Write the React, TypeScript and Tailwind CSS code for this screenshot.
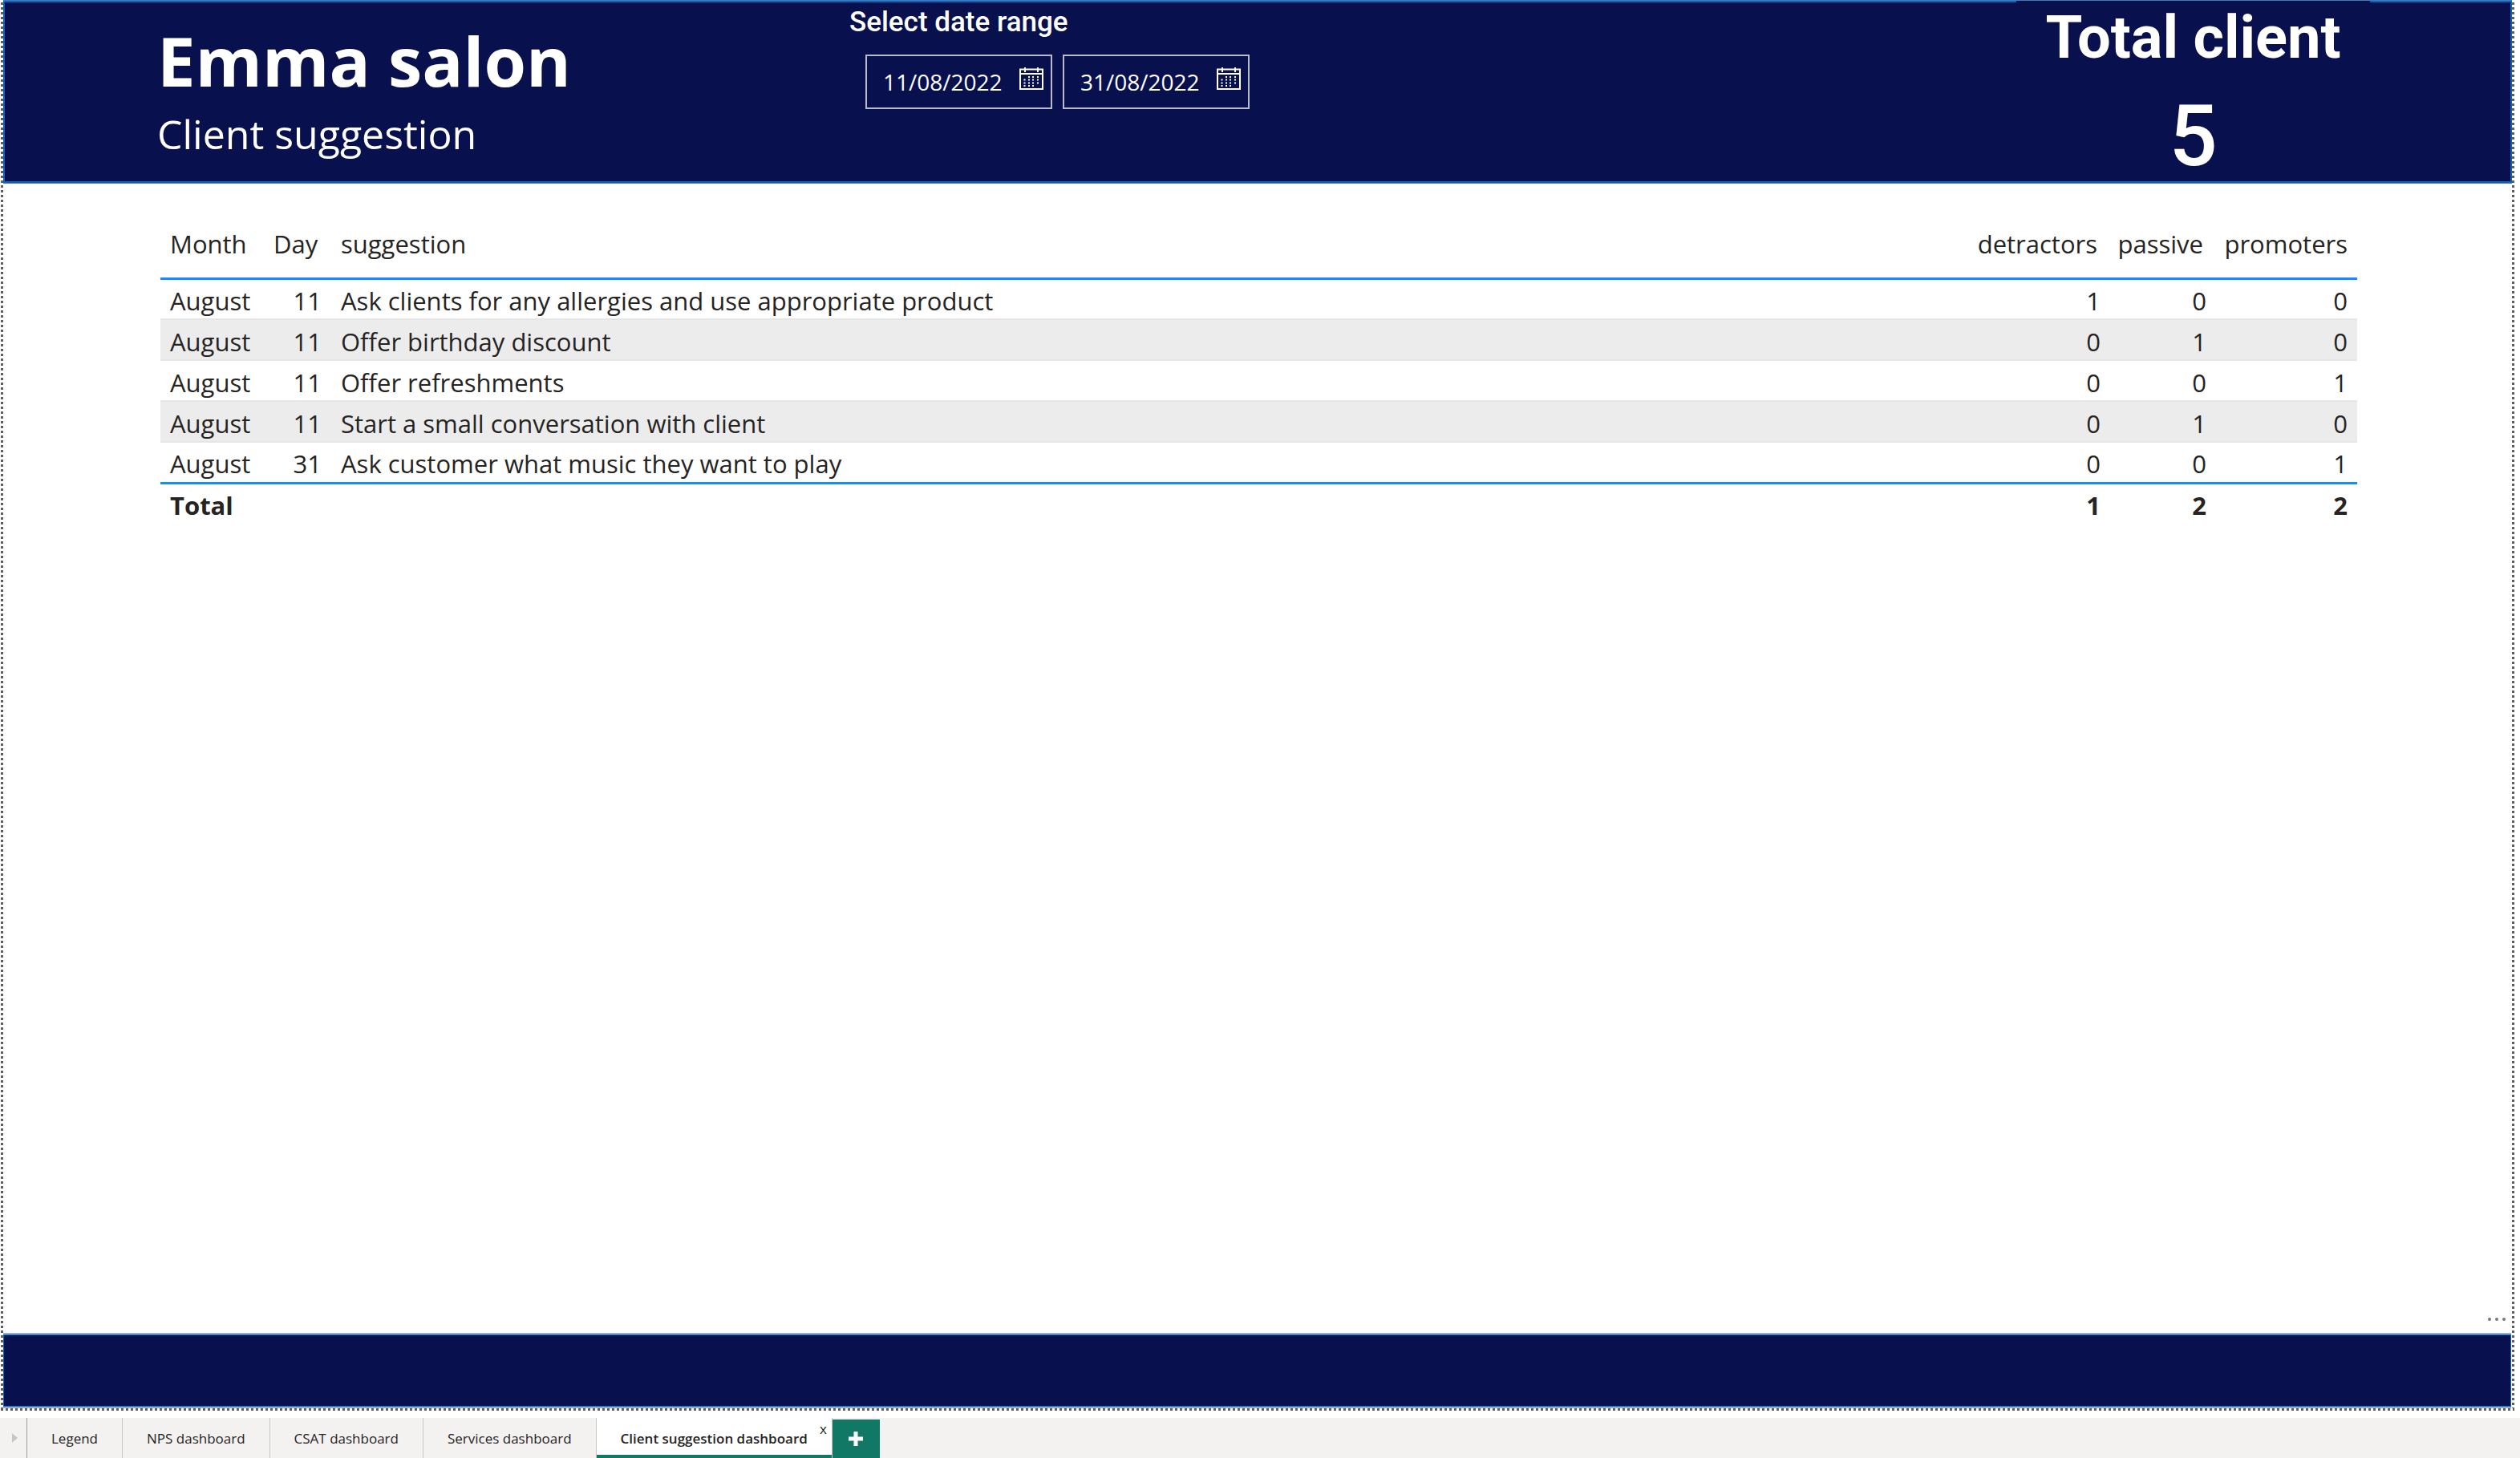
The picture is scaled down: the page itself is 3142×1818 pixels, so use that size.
import React from "react";

const SANS = "font-['Open_Sans','Noto_Sans',sans-serif]";

type Row = { month: string; day: number; text: string; scores: [number, number, number] };

const rows: Row[] = [
  { month: "August", day: 11, text: "Ask clients for any allergies and use appropriate product", scores: [1, 0, 0] },
  { month: "August", day: 11, text: "Offer birthday discount", scores: [0, 1, 0] },
  { month: "August", day: 11, text: "Offer refreshments", scores: [0, 0, 1] },
  { month: "August", day: 11, text: "Start a small conversation with client", scores: [0, 1, 0] },
  { month: "August", day: 31, text: "Ask customer what music they want to play", scores: [0, 0, 1] },
];

const totals = [1, 2, 2];

const tabs = ["Legend", "NPS dashboard", "CSAT dashboard", "Services dashboard"];

function CalendarIcon() {
  return (
    <svg viewBox="0 0 30 28" className="h-7 w-[30px]" fill="none" stroke="white" aria-hidden="true">
      <rect x="1" y="2.5" width="28" height="24.5" strokeWidth="2" />
      <path d="M1 8h28" strokeWidth="2" />
      <path d="M7 0v6M23 0v6" strokeWidth="2" />
      <path
        d="M11 12h2M16 12h2M22 12h2M5.500 15.500h2M11 15.500h2M16 15.500h2M22 15.500h2M5.500 19.500h2M11 19.500h2M16 19.500h2M22 19.500h2M5.500 23h2M11 23h2M16 23h2"
        strokeWidth="2"
      />
    </svg>
  );
}

function DateBox({ label, value }: { label: string; value: string }) {
  return (
    <div className="flex h-[68px] w-[233px] items-center border-2 border-[#b9bbcc] pl-5 pr-[9px]">
      <input
        type="text"
        aria-label={label}
        defaultValue={value}
        className="w-40 min-w-0 bg-transparent text-[28px] leading-9 text-white outline-none"
      />
      <button type="button" aria-label={`Open calendar, ${label}`} className="mb-2 ml-auto">
        <CalendarIcon />
      </button>
    </div>
  );
}

function Header() {
  return (
    <header className="flex h-[229px] shrink-0 border-y border-[#4479b4] bg-[#08104d] text-white shadow-[inset_0_0_0_2px_#0f62b5]">
      <div className="w-[1053px] shrink-0 pl-[192px] pt-6">
        <h1 className="text-[85px] font-bold leading-[100px]">Emma salon</h1>
        <p className="text-[50px] leading-[84px]">Client suggestion</p>
      </div>
      <section className="pt-[7px]">
        <h2 className="pl-0.5 font-['Roboto',sans-serif] text-[35px] font-medium leading-10">Select date range</h2>
        <div className="ml-[22px] mt-5 flex gap-[13px]">
          <DateBox label="Start date" value="11/08/2022" />
          <DateBox label="End date" value="31/08/2022" />
        </div>
      </section>
      <section className="mb-0.5 ml-auto mr-[177px] w-[441px] bg-[#08104d] text-center font-['Roboto',sans-serif]">
        <h2 className="whitespace-nowrap text-[74px] font-bold leading-[92px]">Total client</h2>
        <p className="text-[106px] font-medium leading-[154px]">5</p>
      </section>
    </header>
  );
}

function SuggestionTable() {
  return (
    <table className="mt-[54px] w-full table-fixed border-collapse text-left text-[31px] leading-[42px] text-[#252423]">
      <colgroup>
        <col className="w-[131px]" />
        <col className="w-[82px]" />
        <col />
        <col className="w-[172px]" />
        <col className="w-[132px]" />
        <col className="w-[176px]" />
      </colgroup>
      <thead>
        <tr className="h-16 border-b-[3px] border-[#118dff] align-top">
          <th className="pl-3 font-normal">Month</th>
          <th className="pl-2.5 font-normal">Day</th>
          <th className="pl-3 font-normal">suggestion</th>
          <th className="pr-4 text-right font-normal">detractors</th>
          <th className="pr-4 text-right font-normal">passive</th>
          <th className="pr-3 text-right font-normal">promoters</th>
        </tr>
      </thead>
      <tbody>
        {rows.map((r, i) => (
          <tr key={i} className="h-[51px] border-b-2 border-[#e6e6e6] even:bg-[#ececec] last:border-b-[3px] last:border-[#118dff]">
            <td className="pl-3 pt-1">{r.month}</td>
            <td className="pr-3 pt-1 text-right">{r.day}</td>
            <td className="pl-3 pt-1">{r.text}</td>
            {r.scores.map((s, j) => (
              <td key={j} className="pr-3 pt-1 text-right">{s}</td>
            ))}
          </tr>
        ))}
      </tbody>
      <tfoot>
        <tr className="h-[51px] font-bold">
          <th scope="row" colSpan={3} className="pl-3 pt-1">Total</th>
          {totals.map((t, j) => (
            <td key={j} className="pr-3 pt-1 text-right">{t}</td>
          ))}
        </tr>
      </tfoot>
    </table>
  );
}

function PageTabs() {
  return (
    <nav aria-label="Report pages" className="mt-[9px] flex h-[50px] shrink-0 bg-[#f3f2f1] text-[17px] text-[#252423]">
      <button type="button" aria-label="Next pages" className="flex w-[34px] items-center justify-end border-r border-[#a19f9d] pr-[11px]">
        <svg viewBox="0 0 7 12" className="h-3 w-[7px]" fill="#c8c6c4" aria-hidden="true">
          <path d="M0 0l7 6-7 6z" />
        </svg>
      </button>
      {tabs.map((t) => (
        <button key={t} type="button" className="border-r border-[#c8c6c4] px-[30px] pt-0.5">
          {t}
        </button>
      ))}
      <div className="relative flex border-r border-[#c8c6c4] bg-white">
        <button type="button" aria-current="page" className="border-b-4 border-[#117865] px-[30px] pt-1.5 font-semibold">
          Client suggestion dashboard
        </button>
        <button type="button" aria-label="Delete page" className="absolute right-1.5 top-1 text-[17px] leading-5">
          x
        </button>
      </div>
      <button type="button" aria-label="New page" className="mt-0.5 flex w-[59px] items-center justify-center bg-[#117865]">
        <svg viewBox="0 0 18 18" className="size-[18px]" stroke="white" strokeWidth="5" aria-hidden="true">
          <path d="M9 0v18M0 9h18" />
        </svg>
      </button>
    </nav>
  );
}

export default function App() {
  return (
    <div className={`flex min-h-screen flex-col bg-white ${SANS}`}>
      <div className="mr-[7px] flex grow flex-col pl-px">
        <div className="flex grow">
          <div className="w-[3px] shrink-0 bg-[repeating-linear-gradient(to_bottom,#fff_0px_3px,#605e5c_3px_6px)]" />
          <div className="flex grow flex-col">
            <Header />
            <main className="flex grow flex-col pl-[196px] pr-[193px]">
              <SuggestionTable />
            </main>
            <div className="flex justify-end pb-[15px] pr-2">
              <button type="button" aria-label="More options" className="flex gap-[5px]">
                <span className="size-1 rounded-full bg-[#7a7876]" />
                <span className="size-1 rounded-full bg-[#7a7876]" />
                <span className="size-1 rounded-full bg-[#7a7876]" />
              </button>
            </div>
            <footer className="mr-px h-[94px] shrink-0 border-y-2 border-[#8fb0d6] bg-[#08104d] shadow-[inset_0_0_0_1px_#1068bd]" />
          </div>
          <div className="w-[3px] shrink-0 bg-[repeating-linear-gradient(to_bottom,#fff_0px_3px,#605e5c_3px_6px)]" />
        </div>
        <div className="h-[3px] shrink-0 bg-[repeating-linear-gradient(to_right,#605e5c_0px_3px,#fff_3px_6px)]" />
      </div>
      <PageTabs />
    </div>
  );
}
